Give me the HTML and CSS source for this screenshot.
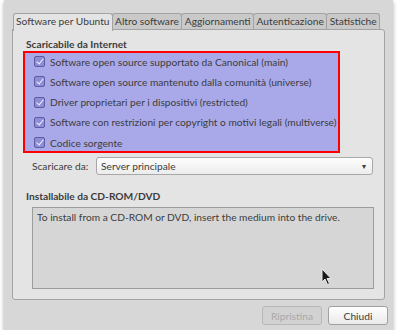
FILE: index.html
```html
<!DOCTYPE html>
<html>
<head>
    <title>Sorgenti software</title>
    <link rel="stylesheet" href="styles.css">
</head>
<body>
    <div class="finestra">
        <div class="schede">
            <div class="scheda attiva">Software per Ubuntu</div>
            <div class="scheda">Altro software</div>
            <div class="scheda">Aggiornamenti</div>
            <div class="scheda">Autenticazione</div>
            <div class="scheda">Statistiche</div>
        </div>

        <div class="pannello">
            <h2>Scaricabile da Internet</h2>

            <div class="sorgenti">
                <label class="voce"><span class="spunta"></span>Software open source supportato da Canonical (main)</label>
                <label class="voce"><span class="spunta"></span>Software open source mantenuto dalla comunità (universe)</label>
                <label class="voce"><span class="spunta"></span>Driver proprietari per i dispositivi (restricted)</label>
                <label class="voce"><span class="spunta"></span>Software con restrizioni per copyright o motivi legali (multiverse)</label>
                <label class="voce"><span class="spunta"></span>Codice sorgente</label>
            </div>

            <div class="riga-server">
                <span class="etichetta">Scaricare da:</span>
                <div class="combo">
                    <span>Server principale</span>
                    <span class="freccia">▾</span>
                </div>
            </div>

            <h2 class="cdrom">Installabile da CD-ROM/DVD</h2>
            <div class="riquadro-cd">To install from a CD-ROM or DVD, insert the medium into the drive.</div>

            <svg class="cursore" width="12" height="18" viewBox="0 0 12 18">
                <path d="M1 1 L1 14 L4 11 L6.5 16.5 L8.5 15.5 L6 10.5 L10 10.5 Z" fill="#1a1a1a" stroke="#e8e8e8" stroke-width="1"/>
            </svg>
        </div>

        <div class="botoni">
            <button class="disattivo">Ripristina</button>
            <button>Chiudi</button>
        </div>
    </div>
</body>
</html>
```

FILE: styles.css
```css
body {
    margin: 0;
    background: #fff;
    font-family: Lato, "Open Sans", sans-serif;
    font-size: 10.2px;
    color: #3c3c3c;
}

.finestra {
    margin-left: 4px;
    width: 389px;
    height: 330px;
    background: #d7d7d7;
    box-shadow: 0 2px 4px rgba(0, 0, 0, 0.35);
    padding: 13px 0 0 8px;
    box-sizing: border-box;
    position: relative;
}

.schede {
    display: flex;
    margin-left: 1px;
    height: 16px;
}

.scheda {
    padding: 0 2.5px;
    line-height: 15px;
    white-space: nowrap;
    background: #c9c9c9;
    border: 1px solid #a3a3a3;
    border-bottom: none;
    border-radius: 3px 3px 0 0;
    margin-right: -1px;
}

.scheda.attiva {
    padding: 0 2px;
    background: #e4e4e4;
    position: relative;
    z-index: 1;
    height: 17px;
}

.pannello {
    position: relative;
    width: 373px;
    height: 271px;
    box-sizing: border-box;
    background: #e4e4e4;
    border: 1px solid #a3a3a3;
    border-radius: 0 3px 3px 3px;
    padding: 8px 0 0 13px;
}

h2 {
    margin: 0;
    font-size: 10.2px;
    font-weight: bold;
    line-height: 13px;
}

.sorgenti {
    margin: 0 0 0 -3px;
    width: 317px;
    height: 102px;
    box-sizing: border-box;
    background: #a9a9e9;
    border: 2px solid #f00;
    padding: 0 0 0 9px;
    display: flex;
    flex-direction: column;
    justify-content: center;
}

.voce {
    flex: none;
    display: flex;
    align-items: center;
    height: 20.25px;
    white-space: nowrap;
}

.spunta {
    flex: none;
    width: 9px;
    height: 9px;
    margin-right: 5px;
    border: 1px solid #5c5ca0;
    border-radius: 2px;
    background: #8e8ed8;
    position: relative;
}

.spunta::after {
    content: "";
    position: absolute;
    left: 3px;
    top: 0;
    width: 3px;
    height: 6px;
    border: solid #f0f0ff;
    border-width: 0 1.5px 1.5px 0;
    transform: rotate(40deg);
}

.riga-server {
    display: flex;
    align-items: center;
    margin: 4px 0 0 6px;
}

.etichetta {
    width: 64px;
}

.combo {
    display: flex;
    justify-content: space-between;
    align-items: center;
    width: 277px;
    height: 18px;
    box-sizing: border-box;
    padding: 0 6px 0 4px;
    background: linear-gradient(#fdfdfd, #ececec);
    border: 1px solid #a8a8a8;
    border-radius: 3px;
}

.freccia {
    font-size: 8px;
}

.cdrom {
    margin-top: 15px;
}

.riquadro-cd {
    margin: 4px 0 0 6px;
    width: 342px;
    height: 82px;
    box-sizing: border-box;
    background: #d6d6d6;
    border: 1px solid #9c9c9c;
    padding: 3px 4px;
}

.cursore {
    position: absolute;
    left: 308px;
    top: 238px;
}

.botoni {
    display: flex;
    justify-content: flex-end;
    gap: 6px;
    margin: 6px 5px 0 0;
}

button {
    width: 60px;
    height: 19px;
    font-family: inherit;
    font-size: 10.2px;
    color: #3c3c3c;
    background: linear-gradient(#fefefe, #eaeaea);
    border: 1px solid #a0a0a0;
    border-radius: 3px;
    padding: 0;
}

button.disattivo {
    color: #a8a8a8;
    background: #d2d2d2;
    border-color: #b8b8b8;
}
```
